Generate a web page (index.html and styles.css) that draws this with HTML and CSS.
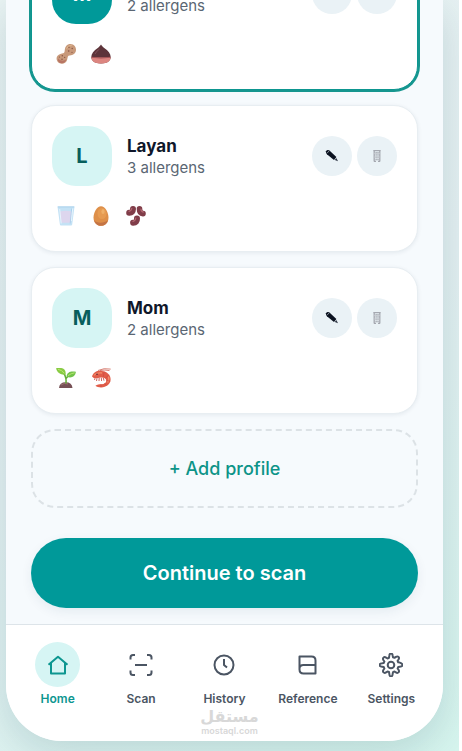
FILE: index.html
```html
<!DOCTYPE html>
<html lang="en">
<head>
    <meta charset="UTF-8">
    <meta name="viewport" content="width=device-width, initial-scale=1.0">
    <title>Profiles</title>
    <link rel="stylesheet" href="styles.css">
</head>
<body>

    <!-- Shared icons -->
    <svg class="hidden" aria-hidden="true">
        <symbol id="icon-edit" viewBox="0 0 14 14">
            <path d="M1 2.200Q2.200.2 4.200 1.300L11.400 7.900 9 11 1.900 5.200Q.8 4 1 2.200Z" fill="#0b1220"/>
            <path d="M11.300 9 13 12.300 9.800 10.900Z" fill="#2a3140"/>
            <path d="M2 4.200 4.200 1.900" stroke="#aab3ba" stroke-width=".8"/>
        </symbol>
        <symbol id="icon-delete" viewBox="0 0 14 14">
            <path d="M3.300 1.700h7.400M4.200 2v10.600M9.800 2v10.600M4 12.300h2M8 12.300h2" stroke="#a5a8b0" stroke-width="1.300" fill="none"/>
            <path d="M6.100 3v9M8 3v9" stroke="#8d9099" stroke-width="1" stroke-dasharray="1.500 .7"/>
            <path d="M4 4.500h6M4 8h6" stroke="#c5c8ce" stroke-width=".7"/>
        </symbol>
    </svg>

    <div class="page">
        <div class="phone">

            <!-- Profile List -->
            <main class="content">
                <section class="profile-card active">
                    <div class="profile-header">
                        <div class="avatar">M</div>
                        <div class="profile-info">
                            <h3>Me</h3>
                            <p>2 allergens</p>
                        </div>
                        <div class="profile-actions">
                            <button type="button" aria-label="Edit"><svg><use href="#icon-edit"/></svg></button>
                            <button type="button" aria-label="Delete"><svg><use href="#icon-delete"/></svg></button>
                        </div>
                    </div>
                    <div class="allergens">
                        <!-- Peanut -->
                        <span><svg viewBox="0 0 20 20">
                            <path d="M10.2 1.9C12.5-.8 17-.4 18.9 2.3c2.2 3.2 1 7.2-2.2 8.5-2.2.9-4.4.3-4.9 2-.6 2.5-.5 4.4-2.7 5.9-2.7 1.9-6.5 1-7.9-1.8-1.6-3.2 0-6.2 3.2-7 2.3-.6 3.8-.4 4.2-2.4.3-2.1.2-3.9 1.6-5.6Z" fill="#c8997a"/>
                            <path d="M2.1 14.5c2.5 2.8 5.8 2.7 8.3.8-.4 2.8-3.2 4.5-5.9 3.8-2-.5-3-2.200-2.400-4.600Z" fill="#b87564"/>
                            <path d="M10 5.500c.6-3 3.200-5 6.300-3.800-2.800.2-4.800 1.900-6.300 3.800Z" fill="#e0ba8f"/>
                            <g fill="#865342"><circle cx="13" cy="3.300" r=".7"/><circle cx="16.200" cy="4.500" r=".7"/><circle cx="12.700" cy="7" r=".8"/><circle cx="16" cy="8.300" r=".6"/><circle cx="6.300" cy="11.700" r=".7"/><circle cx="3.500" cy="13" r=".6"/><circle cx="6" cy="15.300" r=".7"/><circle cx="8.700" cy="13.400" r=".6"/></g>
                        </svg></span>
                        <!-- Chestnut -->
                        <span><svg viewBox="0 0 20 20">
                            <path d="M10 .6c.6 1.200 1.400 2 3.200 3.300 4 2.700 6.600 5.800 6.500 9.400-.1 3.800-3.400 6.100-9.700 6.100S.4 17.100.3 13.300C.2 9.700 2.800 6.600 6.800 3.900 8.600 2.600 9.400 1.800 10 .6Z" fill="#5d343a"/>
                            <path d="M.4 13.500h19.200c0 3.900-3.500 6-9.600 6s-9.600-2.100-9.600-6Z" fill="#dc8580"/>
                            <path d="M.6 13.300q9.400 1.500 18.800 0" stroke="#a95558" stroke-width="1" fill="none"/>
                            <path d="M4 10q1.500-3 4.500-5" stroke="#80515a" stroke-width="1" fill="none"/>
                        </svg></span>
                    </div>
                </section>

                <section class="profile-card">
                    <div class="profile-header">
                        <div class="avatar">L</div>
                        <div class="profile-info">
                            <h3>Layan</h3>
                            <p>3 allergens</p>
                        </div>
                        <div class="profile-actions">
                            <button type="button" aria-label="Edit Layan"><svg><use href="#icon-edit"/></svg></button>
                            <button type="button" aria-label="Delete Layan"><svg><use href="#icon-delete"/></svg></button>
                        </div>
                    </div>
                    <div class="allergens">
                        <!-- Milk -->
                        <span><svg viewBox="0 0 20 20">
                            <path d="M1.500.5h17l-2.300 18q-.1 1-1.100 1H5q-1 0-1.100-1Z" fill="#c4e2f5"/>
                            <path d="M4 5.500q6-1.500 12 0l-1.400 11.200H5.400Z" fill="#ddd6ee"/>
                            <path d="M1.800.9h16.400M15.700 2.500 14.200 17.500" stroke="#a3cdea" stroke-width=".8" fill="none"/>
                            <path d="M3.700 3 5.200 17.500M16.700 2.500 15.400 15" stroke="#eff9ff" stroke-width=".8"/>
                        </svg></span>
                        <!-- Egg -->
                        <span><svg viewBox="0 0 20 20">
                            <path d="M10 .2c4.100 0 7.500 6.300 7.500 11.300 0 5.200-3.200 8.300-7.500 8.300s-7.500-3.100-7.500-8.300C2.500 6.500 5.900.2 10 .2Z" fill="#de8f49"/>
                            <path d="M3 14c2.500 3.300 9.500 3.700 14 .2-1.100 3.700-3.700 5.600-7 5.600S4 17.700 3 14Z" fill="#c47445"/>
                            <ellipse cx="11" cy="7.500" rx="4.500" ry="5.500" fill="#e69b52"/>
                            <ellipse cx="12" cy="5.500" rx="1.600" ry="2.600" fill="#efb069"/>
                        </svg></span>
                        <!-- Beans -->
                        <span><svg viewBox="0 0 20 20">
                            <g fill="none" stroke-linecap="round">
                                <path d="M3.200 6.800Q6.900 7 7 3" stroke="#803d49" stroke-width="6"/>
                                <path d="M13.500 2.800Q13.500 7.400 17 7.600" stroke="#803d49" stroke-width="5.600"/>
                                <path d="M7.100 16.700Q11.200 16.500 11 12.600" stroke="#803d49" stroke-width="6"/>
                                <path d="M3 5.300Q5.100 5.100 5.800 2.500M14.900 3Q15 5.600 17.300 6.200M7 15.300Q9.300 15 9.800 12" stroke="#b26770" stroke-width="1.200"/>
                            </g>
                        </svg></span>
                    </div>
                </section>

                <section class="profile-card">
                    <div class="profile-header">
                        <div class="avatar">M</div>
                        <div class="profile-info">
                            <h3>Mom</h3>
                            <p>2 allergens</p>
                        </div>
                        <div class="profile-actions">
                            <button type="button" aria-label="Edit Mom"><svg><use href="#icon-edit"/></svg></button>
                            <button type="button" aria-label="Delete Mom"><svg><use href="#icon-delete"/></svg></button>
                        </div>
                    </div>
                    <div class="allergens">
                        <!-- Seedling -->
                        <span><svg viewBox="0 0 20 20">
                            <path d="M3 20q.4-5.800 6.700-5.800T16.500 20Z" fill="#765055"/>
                            <path d="M5 17q3-2.600 7-1" stroke="#9c7470" stroke-width="1" fill="none"/>
                            <path d="M9.900 15.500Q10.700 10 8 5.500M10 10.500Q11.500 8.500 14 6.500" stroke="#62ae35" stroke-width="1.500" fill="none"/>
                            <path d="M9.600 6.500C5.500 7.200 1 5.200.1.200 4.500-.7 10.500-.3 9.600 6.500Z" fill="#88cb43"/>
                            <path d="M10.500 8.500C11 3.500 15.500 2.800 19.900 3.800c-.5 5-5 6.900-9.400 4.700Z" fill="#72c24b"/>
                            <path d="M2 1.300Q6 2 8.300 5.300M12 7.700Q15 5.300 18.600 4.800" stroke="#b7e66c" stroke-width="1" fill="none"/>
                        </svg></span>
                        <!-- Shrimp -->
                        <span><svg viewBox="0 0 20 20">
                            <path d="M7 2.500Q13-.4 19.700 1.100M9 2.500Q14 1.500 18.500 2.600" stroke="#cf6658" stroke-width=".8" fill="none"/>
                            <path d="M1 8.500C2.500 3.300 7.500 1.800 12.700 3.300c4.500 1.300 7 4.400 6.900 8.200-.1 4.700-4.500 8-9.600 7.900-2.300 0-4.200-.8-5.600-1.700 1.800-1.200 3.800-1.500 5.900-1.500 3-.1 5.100-1.500 5-3.700-.1-2.500-2.900-3.300-5.800-3C6.500 9.800 3.500 11.500 1 8.500Z" fill="#e15d49"/>
                            <path d="M2.800 7.400Q6 4.100 11 5M17.500 8.500q1 3.500-1 6" stroke="#f28a69" stroke-width="1.300" fill="none"/>
                            <path d="M4 10.300 3.500 12M6 10.200 5.500 13M8.200 9.800 8 13M10.300 9.700l.3 3.300M12.300 10l.7 2.700" stroke="#cb5249" stroke-width=".9" fill="none"/>
                            <path d="m13.200 3.700-1 5.500M17.800 6.800l-3.200 3.500M19.200 13.200l-4-.9M15.300 17.700l-2-2.500M10 19v-3" stroke="#c94841" stroke-width=".6" fill="none"/>
                            <circle cx="6" cy="6.300" r=".8" fill="#562632"/>
                        </svg></span>
                    </div>
                </section>

                <button type="button" class="add-profile">+ Add profile</button>
                <button type="button" class="continue">Continue to scan</button>
            </main>

            <!-- Bottom Navbar -->
            <nav class="navbar">
                <a href="#" class="current">
                    <span class="nav-icon"><svg viewBox="0 0 24 24"><path d="m2.500 11.700 9.500-8 9.500 8M5 10v10.500h14V10"/></svg></span>
                    Home
                </a>
                <a href="#">
                    <span class="nav-icon"><svg viewBox="0 0 24 24"><path d="M1.500 6.500v-2q0-2.500 2.500-2.500h2M18 2h2q2.500 0 2.500 2.500v2M22.500 17.500v2q0 2.500-2.500 2.500h-2M6 22H4q-2.500 0-2.500-2.500v-2M6 12h12"/></svg></span>
                    Scan
                </a>
                <a href="#">
                    <span class="nav-icon"><svg viewBox="0 0 24 24"><circle cx="12" cy="12" r="9.500"/><path d="M12 6v6l3 2.500"/></svg></span>
                    History
                </a>
                <a href="#">
                    <span class="nav-icon"><svg viewBox="0 0 24 24"><path d="M3.500 3.500h12q4 0 4 4v13h-12q-4 0-4-4ZM3.500 15.500q0-3.500 4-3.500h12"/></svg></span>
                    Reference
                </a>
                <a href="#">
                    <span class="nav-icon"><svg viewBox="0 0 24 24"><circle cx="12" cy="12" r="3.300"/><path d="M10.300 2.700Q10.500.500 12 .500t1.700 2.200l.3 1.500 1.500.6 1.400-.9q1.600-1 2.600 0t0 2.600l-.9 1.300.6 1.500 1.600.3Q23.500 10.500 23.500 12t-2.700 1.700l-1.600.3-.6 1.500.9 1.300q1 1.600 0 2.600t-2.600 0l-1.400-.9-1.500.6-.3 1.600Q13.500 23.500 12 23.500t-1.700-2.800L10 19l-1.500-.5-1.400.9q-1.600 1-2.600 0t0-2.600l.9-1.300-.6-1.500-1.600-.3Q.5 13.500.5 12t2.700-1.700l1.600-.3.6-1.500-.9-1.300q-1-1.600 0-2.600t2.600 0l1.400.9 1.500-.6Z"/></svg></span>
                    Settings
                </a>
            </nav>
        </div>

        <div class="watermark">
            <span class="watermark-name" lang="ar" dir="rtl">مستقل</span>
            <span class="watermark-url">mostaql.com</span>
        </div>
    </div>

</body>
</html>
```
FILE: styles.css
```css
* {
    box-sizing: border-box;
}

body {
    margin: 0;
    background-color: #fff;
    font-family: Inter, "Liberation Sans", sans-serif;
    color: #0f172a;
}

h3, p {
    margin: 0;
}

button {
    border: none;
    font-family: inherit;
    cursor: pointer;
}

.hidden {
    position: absolute;
    width: 0;
    height: 0;
}

/* Page Background */
.page {
    position: relative;
    height: 100vh;
    margin-right: 3px;
    padding: 0 16px 10px 6px;
    overflow: hidden;
    background: linear-gradient(150deg, #e9f3f3 0%, #e4f0f2 50%, #d6f5ee 100%);
}

.phone {
    display: flex;
    flex-direction: column;
    height: 100%;
    overflow: hidden;
    background-color: #f6fafd;
    border-radius: 0 0 56px 56px;
    box-shadow: 0 12px 40px rgba(15, 60, 80, 0.16);
}

/* Profile List, scrolled to its end */
.content {
    display: flex;
    flex: 1;
    flex-direction: column;
    justify-content: flex-end;
    gap: 15px;
    min-height: 0;
    padding: 0 25px 16px;
}

.profile-card {
    flex-shrink: 0;
    padding: 20px;
    background-color: #fff;
    border: 1px solid #e8eef2;
    border-radius: 24px;
    box-shadow: 0 1px 4px rgba(15, 40, 60, 0.08);
}

.profile-card.active {
    border-color: #0d9690;
    box-shadow: 0 0 0 2px #16968f;
}

.profile-header {
    display: flex;
    align-items: center;
    gap: 15px;
}

.avatar {
    display: flex;
    justify-content: center;
    align-items: center;
    width: 60px;
    height: 60px;
    background-color: #d6f5f4;
    border-radius: 24px;
    color: #075e5c;
    font-size: 20px;
    font-weight: 700;
}

.active .avatar {
    background-color: #009999;
    color: #fff;
}

.profile-info {
    flex: 1;
    padding-top: 2px;
}

.profile-info h3 {
    font-size: 17px;
    font-weight: 700;
    line-height: 22px;
}

.profile-info p {
    color: #5a6673;
    font-size: 15px;
    line-height: 22px;
}

.profile-actions {
    display: flex;
    gap: 5px;
}

.profile-actions button {
    display: flex;
    justify-content: center;
    align-items: center;
    width: 40px;
    height: 40px;
    padding: 0;
    background-color: #eaf2f6;
    border-radius: 50%;
}

.profile-actions svg {
    width: 14px;
    height: 14px;
}

.allergens {
    display: flex;
    gap: 7px;
    margin-top: 15px;
}

.allergens span {
    display: flex;
    justify-content: center;
    align-items: center;
    width: 28px;
    height: 30px;
}

.allergens svg {
    width: 20px;
    height: 20px;
}

/* Buttons */
.add-profile {
    flex-shrink: 0;
    height: 79px;
    background-color: transparent;
    border: 2px dashed #dce2e6;
    border-radius: 24px;
    color: #0d9488;
    font-size: 18px;
    font-weight: 500;
}

.continue {
    flex-shrink: 0;
    height: 70px;
    margin-top: 15px;
    background-color: #009999;
    border-radius: 35px;
    box-shadow: 0 4px 12px rgba(15, 60, 80, 0.07);
    color: #fff;
    font-size: 20px;
    font-weight: 600;
}

/* Bottom Navbar */
.navbar {
    display: grid;
    grid-template-columns: repeat(5, 1fr);
    padding: 17px 10px 34px;
    background-color: #fff;
    border-top: 1px solid #dde4e9;
}

.navbar a {
    display: flex;
    flex-direction: column;
    align-items: center;
    gap: 4px;
    color: #4b5563;
    font-size: 12px;
    font-weight: 600;
    line-height: 16px;
    text-decoration: none;
}

.nav-icon {
    display: flex;
    justify-content: center;
    align-items: center;
    width: 45px;
    height: 45px;
    border-radius: 50%;
}

.nav-icon svg {
    width: 24px;
    height: 24px;
    fill: none;
    stroke: currentColor;
    stroke-width: 2;
    stroke-linejoin: round;
}

.navbar .current {
    color: #0d9690;
}

.current .nav-icon {
    background-color: #d6f5f4;
}

/* Watermark */
.watermark {
    position: absolute;
    right: 0;
    bottom: 15px;
    left: 0;
    display: flex;
    flex-direction: column;
    align-items: center;
    color: #d8d8d8;
    pointer-events: none;
}

.watermark-name {
    font-family: "DejaVu Sans", sans-serif;
    font-size: 16px;
    font-weight: 700;
    line-height: 18px;
}

.watermark-url {
    font-size: 9px;
    font-weight: 600;
    line-height: 10px;
}
```
